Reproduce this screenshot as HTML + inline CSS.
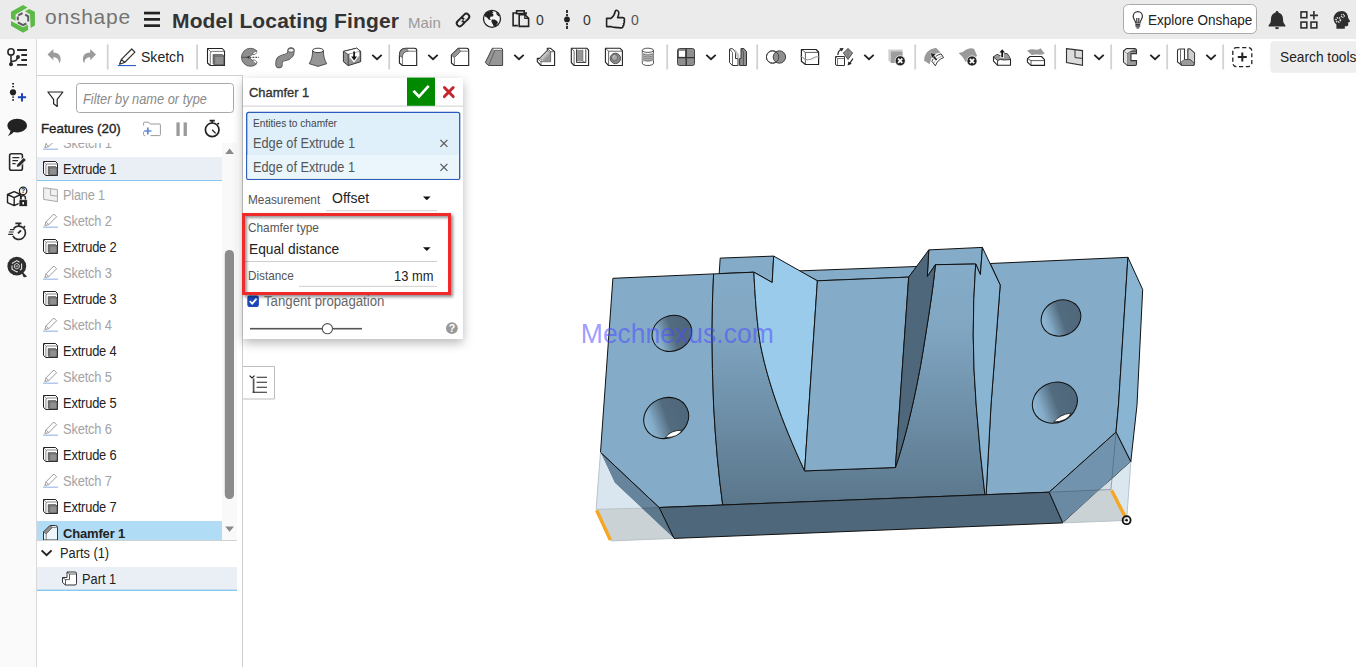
<!DOCTYPE html>
<html lang="en">
<head>
<meta charset="utf-8">
<title>Model Locating Finger</title>
<style>
*{box-sizing:border-box;margin:0;padding:0}
html,body{width:1356px;height:667px;overflow:hidden;background:#fff;font-family:"Liberation Sans",sans-serif;color:#222}
.abs{position:absolute}
#hdr{position:absolute;left:0;top:0;width:1356px;height:39px;background:#ebebeb}
#side{position:absolute;left:0;top:39px;width:37px;height:628px;background:#fafafa;border-right:1px solid #d9d9d9}
#tb{position:absolute;left:37px;top:39px;width:1319px;height:36px;background:#fff}
#fp{position:absolute;left:37px;top:75px;width:206px;height:592px;background:#fff;border-top:1px solid #cfcfcf;border-right:1px solid #cfcfcf}
.t{position:absolute;white-space:nowrap;line-height:1}
.sep{position:absolute;top:45px;width:2px;height:24px;background:#cfcfcf}
/* feature list */
.row{position:absolute;left:0;width:185px;height:26px}
.row .t{left:26px;top:6px;font-size:14px;color:#222;letter-spacing:-.2px}
.row.dim .t{color:#a3a3a3}
.row svg{position:absolute;left:5px;top:4px}
/* dialog */
#dlg{position:absolute;left:243px;top:77.6px;width:220px;height:261px;background:#fff;box-shadow:0 4px 10px rgba(0,0,0,.28)}
</style>
</head>
<body>
<div id="hdr"></div>
<div id="side"></div>
<div id="tb"></div>
<div id="fp"></div>
<!--MODEL-START-->
<svg class="abs" style="left:0;top:0" width="1356" height="667" viewBox="0 0 1356 667">
<defs>
<linearGradient id="gRib" x1="0" y1="270" x2="0" y2="505" gradientUnits="userSpaceOnUse">
<stop offset="0" stop-color="#84abc7"/><stop offset=".25" stop-color="#80a6c2"/><stop offset="1" stop-color="#5a768b"/>
</linearGradient>
<linearGradient id="gHole" x1="0" y1=".46" x2="1" y2=".54">
<stop offset="0" stop-color="#8fb9d6"/><stop offset=".18" stop-color="#84abc7"/><stop offset=".52" stop-color="#526b7e"/><stop offset="1" stop-color="#4f677a"/>
</linearGradient>
</defs>
<g stroke="#111" stroke-width="1" stroke-linejoin="round">
<!-- back blocks -->
<polygon points="720.2,258.1 773.7,256.1 772.2,282.5 753.9,272.2 719.2,273.6" fill="#84abc7"/>
<polygon points="928.8,249.9 982.4,247.4 980.4,274.6 975.7,264 935.4,264.7 927.3,276.6" fill="#84abc7"/>
<!-- top face -->
<polygon points="798.9,270.9 916.9,266.5 908.7,277.1 817.4,280.8" fill="#84abc7"/>
<!-- left plate -->
<path d="M612.9,278.3 L713.6,273.9 Q710.5,330 713.6,405 Q716.5,460 722.7,505 L659.1,507.5 L600.5,452.4 Z" fill="#84abc7"/>
<!-- right plate -->
<polygon points="990.3,263.5 1127.9,257.3 1118.5,405 1116,432.1 1049.2,492.2 986.1,494.7 991,405 1000.2,285" fill="#84abc7"/>
<!-- right side face -->
<polygon points="1127.9,257.3 1142.7,289.5 1137,405 1130.8,461.8 1116,432.1 1118.5,405" fill="#89b4d2"/>
<!-- U-shaped rib front face -->
<path d="M713.6,273.9 L753.9,272.2 C755,300 758,335 761.8,351.3 C768,380 780,418 804.6,470.9 L895.4,467.5 C910,425 920,370 923,351.3 C928,320 933,290 935.4,264.7 L975.7,264 Q970.5,335 976.2,405 Q979.5,450 984.9,494.7 L722.7,505 Q716.5,460 713.6,405 Q710.5,330 713.6,273.9 Z" fill="url(#gRib)"/>
<!-- light face left of U -->
<path d="M773.7,256.1 L817.4,280.8 L804.6,470.9 C780,418 768,380 761.8,351.3 C758,335 755,300 753.9,272.2 L772.2,282.5 Z" fill="#9acbea"/>
<!-- central block -->
<polygon points="817.4,280.8 908.7,277.1 895.4,467.5 804.6,470.9" fill="#84abc7"/>
<!-- dark face right of U -->
<path d="M908.7,277.1 L928.8,249.9 L927.3,276.6 L935.4,264.7 C933,290 928,320 923,351.3 C920,370 910,425 895.4,467.5 Z" fill="#4f677a"/>
<!-- right lighter sliver -->
<path d="M982.4,247.4 L1000.2,285 L991,405 L986.1,494.7 L984.9,494.7 Q979.5,450 976.2,405 Q970.5,335 975.7,264 L980.4,274.6 Z" fill="#89b4d2"/>
<!-- bottom face -->
<polygon points="659.1,507.5 1049.2,492.2 1062.8,522.9 674,538.4" fill="#4f677a"/>
<!-- chamfer faces -->
<polygon points="600.5,452.4 659.1,507.5 674,538.4 614.6,482.8" fill="#66859d" stroke="none"/>
<polygon points="641.8,508.2 659.1,507.5 674,538.4" fill="#5c788d" stroke="none"/>
<path d="M600.5,452.4 L659.1,507.5 L674,538.4" fill="none"/>
<polygon points="1049.2,492.2 1116,432.1 1130.8,461.8 1062.8,522.9" fill="#7293ad" stroke="none"/>
<polygon points="1049.2,492.2 1099,490 1062.8,522.9" fill="#6a8aa3" stroke="none"/>
<path d="M1062.8,522.9 L1049.2,492.2 L1116,432.1 L1130.8,461.8 L1062.8,522.9" fill="none"/>
<!-- holes -->
<ellipse cx="671.9" cy="333.3" rx="20.3" ry="17.6" transform="rotate(-25 671.9 333.3)" fill="url(#gHole)"/>
<ellipse cx="666.2" cy="418" rx="23" ry="20" transform="rotate(-25 666.2 418)" fill="url(#gHole)"/>
<ellipse cx="1061" cy="318" rx="20.3" ry="17.6" transform="rotate(-25 1061 318)" fill="url(#gHole)"/>
<ellipse cx="1054.9" cy="402.6" rx="23" ry="20" transform="rotate(-25 1054.9 402.6)" fill="url(#gHole)"/>
</g>
<!-- hole white slivers -->
<path d="M665.2,437.6 Q670.4,430.2 682,430.2 Q678.2,437.6 665.2,437.6 Z" fill="#fff" stroke="#111" stroke-width=".8" stroke-linejoin="round"/>
<path d="M1053.7,422.1 Q1059.4,414.4 1071.2,413.1 Q1067.6,421.4 1053.7,422.1 Z" fill="#fff" stroke="#111" stroke-width=".8" stroke-linejoin="round"/>
<!-- ghost regions -->
<polygon points="600.5,452.4 596.1,509.3 641.8,508.2 614.6,482.8" fill="#d9e6ef"/>
<polygon points="596.1,509.3 610.9,540.9 674,538.4 641.8,508.2" fill="#cad2d6"/>
<polygon points="1130.8,461.8 1126.6,520.4 1111,489.5 1112,478.7" fill="#dbe7ef"/>
<polygon points="1062.8,522.9 1126.6,520.4 1111,489.5 1099,490" fill="#cad2d6"/>
<polygon points="1099,490 1111,489.5 1112,478.7" fill="#d2dde4"/>
<g stroke="#b9c3c9" stroke-width="1" fill="none">
<path d="M600.5,452.4 L596.1,509.3 M596.1,509.3 L641.8,508.2 M610.9,540.9 L674,538.4"/>
<path d="M1130.8,461.8 L1126.6,520.4 M1062.8,522.9 L1126.6,520.4"/>
</g>
<g stroke="rgba(60,80,95,.45)" stroke-width="1" fill="none">
<path d="M641.8,508.2 L659.1,507.5 M1116,432.1 L1111,489.5 M1049.2,492.2 L1111,489.5"/>
</g>
<!-- orange edges -->
<path d="M596.6,510.3 L610.4,540" stroke="#f5a623" stroke-width="3.4" stroke-linecap="butt"/>
<path d="M1111.6,490.3 L1125.6,517.6" stroke="#f5a623" stroke-width="3.4" stroke-linecap="butt"/>
<circle cx="1126.6" cy="520.2" r="4" fill="none" stroke="#111" stroke-width="1.8"/>
<circle cx="1126.6" cy="520.2" r="1.3" fill="#111"/>
<text x="580.8" y="342.8" font-family="Liberation Sans, sans-serif" font-size="27" fill="#4a4aff" fill-opacity=".55" textLength="193" lengthAdjust="spacingAndGlyphs">Mechnexus.com</text>
</svg>
<!--MODEL-END-->
<!--HEADER-START-->
<svg class="abs" style="left:0;top:0" width="1356" height="39" viewBox="0 0 1356 39">
<!-- onshape logo -->
<g fill="#5dba47">
<polygon points="11,11.7 23,5.1 27.6,7.6 15.6,14.4 15.6,20.8 11,18.5"/>
<polygon points="29,8.9 34.9,11.7 34.9,25.6 30.6,27.9 30,14.4 25,11.3"/>
<polygon points="11,21 23,27.3 28.1,24.8 28.1,30 23,32.7 11,25.8"/>
</g>
<path d="M18.2,15.3 L22.6,13.1 M25.2,14.6 L28.2,16.3 L28.2,21.6 M26.4,23.5 L23,25.2 L17.8,22.4 M17.8,20.2 L17.8,16.6" fill="none" stroke="#5b5b5b" stroke-width="2"/>
<!-- hamburger -->
<g fill="#222"><rect x="144" y="11.7" width="16" height="2.7"/><rect x="144" y="18" width="16" height="2.7"/><rect x="144" y="24.3" width="16" height="2.7"/></g>
<!-- link icon -->
<g fill="none" stroke="#222" stroke-width="1.9" transform="rotate(-45 463 20)">
<rect x="455.4" y="17.1" width="8.8" height="5.8" rx="2.9"/>
<rect x="461.8" y="17.1" width="8.8" height="5.8" rx="2.9"/>
</g>
<g transform="rotate(-45 463 20)"><rect x="461.2" y="18" width="1.7" height="1.8" fill="#ebebeb"/><rect x="463.2" y="20.3" width="1.7" height="1.8" fill="#ebebeb"/></g>
<!-- globe -->
<circle cx="492" cy="18.8" r="8.5" fill="#f4f4f4" stroke="#222" stroke-width="1.3"/>
<path d="M486.2,12.8 Q488.6,10.9 491.6,10.7 L493.4,12.2 L492.2,13.4 L493.8,14.8 L492.4,16.8 L490.6,16.6 L489.8,18.4 L491.2,19.8 L488.8,19.8 L487,17.6 L485.2,16.8 L484.8,14.8 Z" fill="#222"/>
<path d="M491.8,19.6 L494.6,19.4 L497.4,21.2 L497.8,23 L495.8,26 L494,26.6 L492.6,24 L491.4,21.4 Z" fill="#222"/>
<path d="M496.2,12 Q498.8,13.6 499.8,16.6 L498,16 L496.4,14 Z" fill="#222"/>
<!-- copy/paste icon -->
<g fill="none" stroke="#222" stroke-width="1.6">
<path d="M517,13 h-3.9 v12.6 h4.8"/>
<path d="M524.4,13 h1.8 v1.4"/>
<rect x="516.6" y="10.8" width="7.6" height="2.8" fill="#ebebeb"/>
<path d="M519.2,14.6 h5.6 l3.8,3.8 v8 h-9.4 z" fill="#ebebeb"/>
<path d="M524.8,14.6 v3.8 h3.8" stroke-width="1.2"/>
</g>
<!-- branch dots -->
<g fill="#222"><circle cx="567" cy="19.4" r="2.9"/><rect x="566.1" y="10" width="1.8" height="3"/><rect x="566.1" y="14" width="1.8" height="2.2"/><rect x="566.1" y="23" width="1.8" height="2.2"/><rect x="566.1" y="26" width="1.8" height="3"/></g>
<!-- thumbs up -->
<path d="M606.600,18.400 H611 C613.400,16.600 614.800,14 615.200,11.400 C615.600,9.600 618.800,10 618.800,13 C618.800,14.800 618.200,16.400 617.600,17.600 H622.600 C624.800,17.600 625,20 623.900,20.700 C624.900,21.500 624.600,23 623.500,23.500 C624.200,24.400 623.900,25.700 622.800,26.100 C623.200,27.200 622.400,28 621,27.900 L614.600,27.400 C613,27.300 612.200,26.800 611,26.600 H606.600 Z" fill="none" stroke="#222" stroke-width="1.600" stroke-linejoin="round"/>
<!-- explore button -->
<rect x="1123.5" y="4.5" width="133" height="29" rx="5" fill="#fff" stroke="#aaa"/>
<g fill="none" stroke="#333" stroke-width="1.2">
<path d="M1135.6,23 c0,-2.6 -2.4,-3.6 -2.4,-6.8 a4.6,4.6 0 0 1 9.2,0 c0,3.2 -2.4,4.2 -2.4,6.8 z"/>
<path d="M1135.4,24.6 h4.8 M1135.4,26.2 h4.8 M1136.4,27.8 h2.8 M1136.8,23 v-5 M1138.8,23 v-5"/>
</g>
<!-- bell -->
<path d="M1277,11 c0.9,0 1.4,0.6 1.4,1.4 c3,0.8 4.6,3.2 4.6,6.4 c0,3.6 0.8,5 2.4,6.4 v1.2 h-16.8 v-1.2 c1.6,-1.4 2.4,-2.8 2.4,-6.4 c0,-3.2 1.6,-5.6 4.6,-6.4 c0,-0.8 0.5,-1.4 1.4,-1.4 z M1275,27.2 h4 a2,2 0 0 1 -4,0z" fill="#2e2e2e"/>
<!-- apps -->
<g fill="none" stroke="#2e2e2e" stroke-width="1.6"><rect x="1301" y="11.9" width="5.8" height="5.8"/><rect x="1301" y="22.1" width="5.8" height="5.8"/><rect x="1311" y="22.1" width="5.8" height="5.8"/><path d="M1313.9,11.1 v8.4 M1310,15.4 h8"/></g>
<!-- head with gears -->
<g transform="translate(2683,0) scale(-1,1)">
<path d="M1341,11 c5,0 8.4,3.6 8.4,7.6 c0,3 -1.4,4.8 -2.8,6 v4.2 h-8.4 v-2.6 h-2 c-1,0 -1.4,-0.6 -1.4,-1.4 v-2.4 l-1.6,-0.6 c-0.4,-0.2 -0.4,-0.6 -0.2,-0.9 l1.8,-2.9 c0.2,-4 2.6,-7 6.200,-7 z" fill="#2e2e2e"/>
</g>
<circle cx="1338.2" cy="19.9" r="2.2" fill="none" stroke="#ebebeb" stroke-width="1.6" stroke-dasharray="1.15 0.85"/>
<circle cx="1342.8" cy="15.8" r="1.5" fill="none" stroke="#ebebeb" stroke-width="1.3" stroke-dasharray="0.9 0.7"/>
</svg>
<div class="t" style="left:45px;top:6.1px;font-size:21px;color:#747474;letter-spacing:.77px">onshape</div>
<div class="t" style="left:172px;top:10.3px;font-size:21px;font-weight:700;color:#333;letter-spacing:.15px">Model Locating Finger</div>
<div class="t" style="left:408px;top:15.4px;font-size:15px;color:#999;letter-spacing:.1px">Main</div>
<div class="t" style="left:536px;top:12.4px;font-size:15px;color:#333;transform:scaleX(0.933);transform-origin:0 0">0</div>
<div class="t" style="left:583px;top:12.4px;font-size:15px;color:#333;transform:scaleX(0.933);transform-origin:0 0">0</div>
<div class="t" style="left:631px;top:12.4px;font-size:15px;color:#555;transform:scaleX(0.933);transform-origin:0 0">0</div>
<div class="t" style="left:1148.2px;top:11.7px;font-size:15px;color:#222;transform:scaleX(0.900);transform-origin:0 0">Explore Onshape</div>
<!--HEADER-END-->
<!--TOOLBAR-START-->
<svg class="abs" style="left:0;top:39px" width="1356" height="37" viewBox="0 39 1356 37">
<!-- bottom border of toolbar -->
<!-- separators -->
<g fill="#d2d2d2">
<rect x="106.8" y="44.5" width="1.8" height="25"/><rect x="196.2" y="44.5" width="1.8" height="25"/><rect x="388.3" y="44.5" width="1.8" height="25"/><rect x="666.3" y="44.5" width="1.8" height="25"/><rect x="756.3" y="44.5" width="1.8" height="25"/><rect x="914.3" y="44.5" width="1.8" height="25"/><rect x="1054.3" y="44.5" width="1.8" height="25"/><rect x="1110.3" y="44.5" width="1.8" height="25"/><rect x="1166.3" y="44.5" width="1.8" height="25"/><rect x="1222.3" y="44.5" width="1.8" height="25"/>
</g>
<!-- chevrons -->
<g transform="translate(377,57)"><path d="M-4.7,-2.2 L0,2.2 L4.7,-2.2" fill="none" stroke="#222" stroke-width="1.8"/></g><g transform="translate(433,57)"><path d="M-4.7,-2.2 L0,2.2 L4.7,-2.2" fill="none" stroke="#222" stroke-width="1.8"/></g><g transform="translate(519,57)"><path d="M-4.7,-2.2 L0,2.2 L4.7,-2.2" fill="none" stroke="#222" stroke-width="1.8"/></g><g transform="translate(711,57)"><path d="M-4.7,-2.2 L0,2.2 L4.7,-2.2" fill="none" stroke="#222" stroke-width="1.8"/></g><g transform="translate(869,57)"><path d="M-4.7,-2.2 L0,2.2 L4.7,-2.2" fill="none" stroke="#222" stroke-width="1.8"/></g><g transform="translate(1099,57)"><path d="M-4.7,-2.2 L0,2.2 L4.7,-2.2" fill="none" stroke="#222" stroke-width="1.8"/></g><g transform="translate(1155,57)"><path d="M-4.7,-2.2 L0,2.2 L4.7,-2.2" fill="none" stroke="#222" stroke-width="1.8"/></g><g transform="translate(1211,57)"><path d="M-4.7,-2.2 L0,2.2 L4.7,-2.2" fill="none" stroke="#222" stroke-width="1.8"/></g>
<!-- undo / redo -->
<path d="M47.5,54.5 L53.3,49 V52.6 C58,52.6 60.6,55.4 60.6,59 C60.6,61 60,62.4 59,63.4 C59.3,59.8 57.4,57.2 53.3,57.2 V60.3 Z" fill="#9b9b9b"/>
<path d="M96,54.5 L90.2,49 V52.6 C85.5,52.6 82.9,55.4 82.9,59 C82.9,61 83.5,62.4 84.5,63.4 C84.2,59.8 86.1,57.2 90.2,57.2 V60.3 Z" fill="#9b9b9b"/>
<!-- sketch pencil -->
<g fill="none" stroke="#333" stroke-width="1.2" stroke-linejoin="round">
<path d="M119.6,64.2 L121.4,59.3 L131.7,49 L134.9,52.2 L124.6,62.5 Z M121.4,59.3 L124.6,62.5"/>
</g>
<rect x="117.8" y="65" width="18.2" height="1.1" fill="#2a5fc4"/>
<!-- 1 extrude -->
<path d="M207.5,48.5 H222.2 L224.5,51 V65.5 H210.3 L207.5,63 Z" fill="#fff" stroke="#222" stroke-width="1.1" stroke-linejoin="round"/>
<path d="M210.3,65.5 V53.6 Q210.3,51.4 212.5,51.4 H224.5 M207.7,48.7 L210.9,52" fill="none" stroke="#555" stroke-width=".8"/>
<path d="M213.2,54.7 H222.4 L224,56.2 V65 H214.7 L213.2,63.9 Z" fill="#8f8f8f" stroke="#444" stroke-width=".9" stroke-linejoin="round"/>
<path d="M213.2,54.7 L214.7,56.2 H224 M214.7,56.2 V65" fill="none" stroke="#555" stroke-width=".7"/>
<!-- 2 revolve -->
<path d="M256.9,51 A9,9 0 1 0 256.9,63.6 L248.6,57.3 Z" fill="#8f8f8f" stroke="#555" stroke-width=".9"/>
<ellipse cx="254.9" cy="53" rx="2.4" ry="1.2" transform="rotate(-38 254.9 53)" fill="#fff" stroke="#555" stroke-width=".7"/>
<ellipse cx="254.9" cy="61.6" rx="2.4" ry="1.2" transform="rotate(38 254.9 61.6)" fill="#fff" stroke="#555" stroke-width=".7"/>
<path d="M241.6,57.3 H248.4" stroke="#444" stroke-width=".8"/>
<path d="M246.6,57.3 L249.2,55.8 V58.8 Z" fill="#333"/>
<path d="M249.6,57.3 H259" stroke="#222" stroke-width="1" stroke-dasharray="1.8 1.1"/>
<!-- 3 sweep -->
<path d="M279,64.5 C278,54 291,61 291,51" fill="none" stroke="#555" stroke-width="7.4" stroke-linecap="round"/>
<path d="M279,64.5 C278,54 291,61 291,51" fill="none" stroke="#8f8f8f" stroke-width="5.6" stroke-linecap="round"/>
<ellipse cx="291" cy="50.3" rx="3" ry="2" fill="#eee" stroke="#555" stroke-width=".9"/>
<!-- 4 loft -->
<path d="M312.6,50.4 C312.6,56 311.6,60 309.2,63.7 L318,66.4 L326.7,63.7 C324.4,60 323.4,56 323.4,50.4 Z" fill="#969696" stroke="#444" stroke-width=".9" stroke-linejoin="round"/>
<ellipse cx="318" cy="50.4" rx="5.4" ry="2.2" fill="#fff" stroke="#333" stroke-width=".9"/>
<!-- 5 extrude down -->
<path d="M343.4,51.4 L356.7,48.2 L360.7,51.4 V61.7 L348.2,65.6 L343.4,61.7 Z" fill="#969696" stroke="#333" stroke-width="1" stroke-linejoin="round"/>
<path d="M343.4,51.4 L356.7,48.2 L360.7,51.4 L348.2,54.4 Z" fill="#fff" stroke="#333" stroke-width=".8" stroke-linejoin="round"/>
<path d="M348.2,54.4 V65.6" stroke="#333" stroke-width=".8"/>
<path d="M349.6,54.1 L359.2,51.8 V55.5 L354.1,62.6 L349.6,57.4 Z" fill="#fff"/>
<path d="M354.1,51.6 V58.5" stroke="#111" stroke-width="1.7"/>
<path d="M351.2,56.6 L354.1,60.6 L357,56.6 Z" fill="#111"/>
<!-- 6 fillet -->
<path d="M399.4,63 L402.4,65.5 H416.7 V50.6 Q416.7,48.3 414.5,48.3 H406 Q399.4,48.3 399.4,55.5 Z" fill="#fff" stroke="#222" stroke-width="1.1" stroke-linejoin="round"/>
<path d="M399.4,55.5 Q399.4,48.3 406,48.3 L408.6,51.2 Q402.4,51.2 402.4,57.7 Z" fill="#969696" stroke="#444" stroke-width=".7"/>
<path d="M402.4,65.5 V57.7 M408.6,51.2 H416.7" fill="none" stroke="#555" stroke-width=".8"/>
<!-- 7 chamfer -->
<path d="M451.4,63 L454.4,65.5 H468.7 V50.6 Q468.7,48.3 466.5,48.3 H458.2 L451.4,55.1 Z" fill="#fff" stroke="#222" stroke-width="1.1" stroke-linejoin="round"/>
<path d="M451.4,55.1 L458.2,48.3 L460.8,51.2 L454.4,57.7 Z" fill="#969696" stroke="#444" stroke-width=".7"/>
<path d="M454.4,65.5 V57.7 M460.8,51.2 H468.7" fill="none" stroke="#555" stroke-width=".8"/>
<!-- 8 draft -->
<path d="M485.3,62.6 L492.3,48.3 H501 Q502.6,48.3 502.6,50 V65.5 H488.7 Z" fill="#969696" stroke="#444" stroke-width="1" stroke-linejoin="round"/>
<path d="M492.9,48.8 H501 Q502.1,48.8 502.1,50.3 H494.9 Z" fill="#fff"/>
<path d="M488.7,65.5 L494.9,50.3 H502.6" fill="none" stroke="#555" stroke-width=".8"/>
<!-- 9 rib -->
<path d="M537.3,58.4 H539.6 L547.3,50.7 V48.3 H550.6 L554.6,51.7 V65.5 H541 L537.3,61.7 Z" fill="#fff" stroke="#222" stroke-width="1.1" stroke-linejoin="round"/>
<path d="M539.6,58.4 L547.3,50.7 L550.3,52.4 L542.1,60.6 Z" fill="#c4c4c4" stroke="#444" stroke-width=".6"/>
<path d="M542.6,60.9 L550.2,53.2 V60.9 Z" fill="#969696"/>
<path d="M537.3,58.4 L541,61.7 H550.6 V51.7 H554.6 M541,61.7 V65.5 M547.3,48.3 L550.6,51.7" fill="none" stroke="#444" stroke-width=".8"/>
<!-- 10 shell -->
<path d="M571.3,48.3 H587 L588.6,50.2 V65.5 H574.1 L571.3,62.7 Z" fill="#fff" stroke="#222" stroke-width="1.1" stroke-linejoin="round"/>
<path d="M571.3,48.3 L574.1,51.1 V65.5" fill="none" stroke="#444" stroke-width=".8"/>
<rect x="576.5" y="49.8" width="6.4" height="11.5" fill="#969696"/>
<path d="M576.5,61.3 H582.9 L585.8,62.5 H576.5 Z" fill="#bdbdbd"/>
<path d="M582.9,49.8 V61.3 L585.8,62.5" fill="none" stroke="#555" stroke-width=".6"/>
<path d="M576.5,49.3 V62.5 H585.8 V49.3" fill="none" stroke="#333" stroke-width=".9"/>
<!-- 11 hole -->
<path d="M605.4,48.3 H620.1 L622.4,50.7 V65.5 H608.6 L605.4,62.2 Z" fill="#fff" stroke="#222" stroke-width="1.1" stroke-linejoin="round"/>
<path d="M605.4,48.3 L608.6,51.2 H622.4 M608.6,51.2 V65.5" fill="none" stroke="#444" stroke-width=".8"/>
<circle cx="615.4" cy="58.4" r="5.2" fill="#8a8a8a" stroke="#444" stroke-width=".9"/>
<circle cx="614.6" cy="57.6" r="3.1" fill="#a8a8a8" stroke="#555" stroke-width=".7"/>
<path d="M613,57.2 Q613.4,55.6 615,55.4" fill="none" stroke="#ddd" stroke-width=".8"/>
<!-- 12 thread -->
<path d="M642.3,50.3 V63.2 A5.6,2.3 0 0 0 653.5,63.2 V50.3" fill="#fff" stroke="#444" stroke-width=".9"/>
<path d="M642.3,52.6 Q647.9,55 653.5,52.6 V60.7 Q647.9,63.1 642.3,60.7 Z" fill="#c0c0c0"/>
<ellipse cx="647.9" cy="50.3" rx="5.6" ry="2.1" fill="#fff" stroke="#444" stroke-width=".9"/>
<path d="M642.5,54 Q647.9,56.4 653.3,54 M642.5,55.9 Q647.9,58.3 653.3,55.9 M642.5,57.8 Q647.9,60.2 653.3,57.8 M642.5,59.7 Q647.9,62.1 653.3,59.7" fill="none" stroke="#777" stroke-width=".9"/>
<!-- 13 pattern -->
<g stroke="#444" stroke-width="1">
<rect x="677.5" y="48.5" width="17" height="17" rx="2" fill="#8f8f8f"/>
<rect x="678.6" y="50.2" width="7" height="7" fill="#fff" stroke-width=".7"/>
<path d="M686.2,48.5 V65.5 M677.5,57.6 H694.5" fill="none" stroke-width="1.4" stroke="#333"/>
</g>
<!-- 14 mirror -->
<path d="M729.5,49 L732.5,48.6 L735.5,52 V58.6 H738 V65.5 H732.5 L729.5,62.6 Z" fill="#fff" stroke="#333" stroke-width="1"/>
<path d="M732.5,65.5 V52.6 L729.5,49" fill="none" stroke="#444" stroke-width=".8"/>
<path d="M735,48.8 L739.5,55 V60 L736,56 Z" fill="#c9c9c9"/>
<path d="M746.5,51.6 L744,48.6 H741 V58.6 H739.6 V65.5 H746.5 Z" fill="#8f8f8f" stroke="#333" stroke-width="1"/>
<path d="M741,48.6 L743.4,51.6 V65.5" fill="none" stroke="#444" stroke-width=".8"/>
<!-- 15 boolean -->
<circle cx="772.6" cy="57" r="6.2" fill="#fff" stroke="#444" stroke-width="1"/>
<circle cx="779.4" cy="57" r="6.2" fill="#8f8f8f" stroke="#444" stroke-width="1"/>
<circle cx="772.6" cy="57" r="6.2" fill="none" stroke="#444" stroke-width="1"/>
<!-- 16 split -->
<path d="M801.4,49.5 H816 L818.6,52 V64.5 H805.4 L801.4,61.3 Z" fill="#fff" stroke="#222" stroke-width="1.2" stroke-linejoin="round"/>
<path d="M801.5,49.5 L805.4,52.4 H818.5 M805.4,52.4 V64.5" fill="none" stroke="#333" stroke-width=".8"/>
<path d="M800,56 Q803,57 805,59.4 Q810,60.4 813.5,58 T820,57.6" fill="none" stroke="#9a9a9a" stroke-width="1.1"/>
<!-- 17 transform -->
<path d="M835.5,56.5 H844.5 V65.5 H837 Q835.5,65.5 835.5,64 Z" fill="#fff" stroke="#333" stroke-width="1"/>
<path d="M835.5,56.5 L837.5,58.5 H844.5 M837.5,58.5 V65.5" fill="none" stroke="#444" stroke-width=".7"/>
<path d="M848,48.4 L852.6,53 L848,59.4 L843.4,53 Z" fill="#8f8f8f" stroke="#444" stroke-width=".9"/>
<path d="M848,48.4 V59.4" stroke="#666" stroke-width=".6"/>
<path d="M837.8,55 Q838,51 841,49.6" fill="none" stroke="#222" stroke-width="1.1"/>
<path d="M839.4,48.2 L843.6,48 L841.8,51.6 Z" fill="#222"/>
<path d="M853,58.6 L849.6,63.4" fill="none" stroke="#222" stroke-width="1.1"/>
<path d="M847.6,65.6 L848.4,61.4 L851.8,63.8 Z" fill="#222"/>
<!-- 18 delete part -->
<path d="M888.4,49.5 H902.5 V63 H891 L888.4,60.5 Z" fill="#cdcdcd"/>
<rect x="891" y="51.6" width="11.5" height="11.4" fill="#9e9e9e"/>
<g transform="translate(900.2,60.8)"><circle r="5.1" fill="#222" stroke="#fff" stroke-width=".8"/><path d="M-2.1,-2.1 L2.1,2.1 M2.1,-2.1 L-2.1,2.1" stroke="#fff" stroke-width="1.8"/></g>
<!-- 19 modify fillet -->
<path d="M924,60.6 Q924.6,49.6 936,47.8 L940.6,52.6 Q931,53.6 929.6,64.2 Z" fill="#9a9a9a"/>
<path d="M931.8,61.2 Q934.2,56 941,53.8 L943.6,57.6 Q937.6,59.6 935.4,65.8 Z" fill="#fff" stroke="#222" stroke-width=".9" stroke-linejoin="round"/>
<path d="M933.6,63 Q936,58.2 942.2,55.8" fill="none" stroke="#555" stroke-width=".5"/>
<path d="M936.8,60.2 L933,55.8" stroke="#fff" stroke-width="3.2"/>
<path d="M936.6,60 L933,55.8" stroke="#222" stroke-width="1.9"/>
<path d="M930.4,52.8 L936,54 L932,58.2 Z" fill="#222" stroke="#fff" stroke-width=".4"/>
<!-- 20 delete face -->
<path d="M958.6,53 Q963,52.6 966,49.8 Q969.6,47.4 974,48.8 L977.2,56 L965.6,62 Q962.6,56 958.6,53 Z" fill="#9a9a9a"/>
<g transform="translate(972,61)"><circle r="5.1" fill="#222" stroke="#fff" stroke-width=".8"/><path d="M-2.1,-2.1 L2.1,2.1 M2.1,-2.1 L-2.1,2.1" stroke="#fff" stroke-width="1.8"/></g>
<!-- 21 move face -->
<path d="M993.5,57 L997,54.6 Q1001,56.8 1004,54 Q1007,52.6 1008.4,55.4 L1010.5,59.5 V65.3 H997.6 L993.5,61.2 Z" fill="#fff" stroke="#222" stroke-width="1.1" stroke-linejoin="round"/>
<path d="M993.8,57 L997,54.8 Q1001,56.8 1004,54.2 Q1007,52.8 1008.3,55.5 L1010.2,59.4 L1004,60 Q1000,58.6 997.6,60.5 Z" fill="#9a9a9a"/>
<path d="M993.5,57 L997.6,60.5 Q1000,58.6 1004,60 L1010.5,59.5 M997.6,60.5 V65.3" fill="none" stroke="#222" stroke-width=".9"/>
<path d="M1002.2,57.8 V51" stroke="#fff" stroke-width="3.6"/>
<path d="M998.6,53 L1002.2,48.4 L1005.8,53 Z" fill="#fff"/>
<path d="M1002.2,57.2 V51" stroke="#111" stroke-width="1.8"/>
<path d="M999.5,52.5 L1002.2,49.2 L1004.9,52.5 Z" fill="#111"/>
<!-- 22 offset surface -->
<path d="M1027,50.8 Q1031,48.8 1034.6,49.6 Q1038,50.2 1040.6,48.2 L1044.6,53.4 Q1041.6,55.2 1038,54.6 Q1034.6,54 1031.8,55 Z" fill="#9a9a9a"/>
<path d="M1027.4,58.6 L1030,56.5 H1041.5 L1044.5,59.6 V65.4 H1031 L1027.4,62.2 Z" fill="#fff" stroke="#222" stroke-width="1.1" stroke-linejoin="round"/>
<path d="M1027.4,58.6 L1031,60.6 H1044.5 M1031,60.6 V65.4" fill="none" stroke="#333" stroke-width=".8"/>
<!-- 23 plane -->
<path d="M1066.5,48.6 L1082.5,50.6 V65.4 L1066.5,62.6 Z" fill="#dcdcdc" stroke="#333" stroke-width="1.1"/>
<path d="M1075,49.8 V57.6 L1082.5,58.4" fill="none" stroke="#333" stroke-width="1"/>
<!-- 24 frame -->
<path d="M1123.5,51 L1126.5,48.6 H1134.5 Q1136.5,48.6 1136.5,50.6 V53.6 H1131 V60.6 H1136.5 V64 Q1136.5,65.5 1135,65.5 H1127.5 L1123.5,62 Z" fill="#9a9a9a" stroke="#333" stroke-width="1.1"/>
<path d="M1123.5,51 L1127.5,53.6 V65.5 M1127.5,53.6 L1130,51.2 H1136.5" fill="none" stroke="#333" stroke-width=".9"/>
<path d="M1124,51.5 L1127.5,54 V65 L1124,62 Z" fill="#dedede"/><path d="M1124.2,51.4 L1126.6,49.2 H1134 L1130,51.2 L1127.5,53.2 Z" fill="#e6e6e6"/>
<!-- 25 sheet metal -->
<path d="M1177.5,51 Q1177.5,49 1179.5,49 H1184.5 V59.5 H1188 V49 H1190 L1194.5,53 V63.5 Q1194.5,65.5 1192.5,65.5 H1182 L1177.5,62 Z" fill="#fff" stroke="#333" stroke-width="1.1"/>
<path d="M1188,49 H1190 L1194.5,53 V63.5 L1190,59.5 H1188 Z" fill="#cfcfcf" stroke="#333" stroke-width=".8"/>
<path d="M1184.5,59.5 H1190 L1194.5,63.5 Q1194.5,65.5 1192.5,65.5 H1182 L1180.5,62.6 Z" fill="#9a9a9a" stroke="#444" stroke-width=".7"/>
<path d="M1180.5,49.4 V62.6 L1182,65.5" fill="none" stroke="#444" stroke-width=".8"/>
<!-- 26 dashed plus -->
<rect x="1232.8" y="47.6" width="19" height="19" rx="3.5" fill="none" stroke="#222" stroke-width="1.3" stroke-dasharray="4.2 2.6" stroke-dashoffset="1"/>
<path d="M1242.3,52.6 V61.6 M1237.8,57.1 H1246.8" stroke="#222" stroke-width="2"/>
<!-- search tools -->
<path d="M1356,41.2 H1274 Q1270.3,41.2 1270.3,45 V69 Q1270.3,72.8 1274,72.8 H1356 Z" fill="#eeeeee"/>
</svg>
<div class="t" style="left:141px;top:49.2px;font-size:15px;color:#222;transform:scaleX(0.937);transform-origin:0 0">Sketch</div>
<div class="t" style="left:1279.800px;top:48.8px;font-size:15px;color:#222;transform:scaleX(0.916);transform-origin:0 0">Search tools</div>
<!--TOOLBAR-END-->
<!--SIDE-START-->
<svg class="abs" style="left:0;top:39px" width="37" height="260" viewBox="0 39 37 260">
<!-- tree -->
<g fill="none" stroke="#2a2a2a" stroke-width="1.6">
<circle cx="11" cy="51.9" r="3.1"/>
<path d="M11,55 V64 M11,61.5 Q15.2,61.3 16.4,60 L18,57"/>
<path d="M17.1,50 H27 M21.3,55 H27 M21.3,60 H27 M17.1,64.9 H27" stroke-width="1.9"/>
</g>
<circle cx="11" cy="64.2" r="2" fill="#2a2a2a"/><circle cx="18" cy="56.9" r="2" fill="#2a2a2a"/>
<!-- version dots + plus -->
<path d="M13.100,83.1 v1.4 M13.100,85.9 v1.4 M13.100,96.4 v1.4 M13.100,99.3 v1.5" stroke="#222" stroke-width="1.9" fill="none"/>
<circle cx="13" cy="92.3" r="3.1" fill="#222"/>
<path d="M22,93.2 V101.4 M17.9,97.3 H26.1" stroke="#1a44b8" stroke-width="2"/>
<!-- comment bubble -->
<path d="M17.2,118.8 c5.5,0 9.8,3 9.8,6.8 s-4.3,6.8 -9.8,6.8 c-1.2,0 -2.4,-0.150 -3.5,-0.4 c-1.4,1.7 -3.5,3.1 -5.9,3.9 c1.4,-1.5 2.4,-3.3 2.8,-5.100 c-2,-1.3 -3.2,-3.1 -3.2,-5.2 c0,-3.8 4.3,-6.8 9.8,-6.8 z" fill="#222"/>
<!-- note/pencil -->
<rect x="9.6" y="153.8" width="12.8" height="16.4" rx="1.8" fill="none" stroke="#2a2a2a" stroke-width="1.6"/>
<path d="M12.4,157.7 H19.4 M12.4,160.7 H18 M12.4,163.7 H15.6" stroke="#2a2a2a" stroke-width="1.3" fill="none"/>
<path d="M16,167.6 L17,164.2 L23.8,157.4 L26.4,160 L19.6,166.8 Z" fill="#2a2a2a" stroke="#fafafa" stroke-width="1"/>
<!-- cube + lock + ? -->
<g fill="none" stroke="#222" stroke-width="1.4" stroke-linejoin="round">
<path d="M7.5,194.5 L14.2,191.6 L20.6,194.5 V202.6 L14.2,205.6 L7.5,202.6 Z M7.5,194.5 L14.2,197.6 L20.6,194.5 M14.2,197.6 V205.6" fill="#fafafa"/>
</g>
<circle cx="23.1" cy="190.9" r="3.7" fill="#fafafa" stroke="#222" stroke-width="1.2"/>
<text x="23.1" y="193.3" font-size="6.8" font-weight="700" fill="#222" text-anchor="middle" font-family="Liberation Sans, sans-serif">?</text>
<rect x="19" y="199.6" width="8.4" height="7" rx="1" fill="#222" stroke="#fafafa" stroke-width=".8"/>
<path d="M21,199.6 V197.8 a2.2,2.2 0 0 1 4.4,0 V199.6" fill="none" stroke="#222" stroke-width="1.4"/>
<rect x="22.4" y="202" width="1.6" height="2.4" fill="#fafafa"/>
<!-- stopwatch with speed lines -->
<g fill="none" stroke="#2a2a2a" stroke-width="1.7">
<path d="M13.5,228.6 A6.7,6.7 0 1 1 12.9,236"/>
<path d="M18.9,226 V223.6 M15.4,223.3 H21.4 M23.8,227.4 L25,226.2"/>
<path d="M18,233.4 L21,230.3" stroke-width="1.9"/>
<path d="M10,229.7 H14.4 M8.8,232 H13.6 M8.2,234.4 H13.2" stroke-width="1.2"/>
</g>
<!-- onshape magnifier -->
<circle cx="16.8" cy="266.2" r="9.4" fill="#2e2e2e"/>
<path d="M22.6,273 L26,276.4 L24,276.6 Z" fill="#2e2e2e" stroke="#2e2e2e" stroke-width="1.4" stroke-linejoin="round"/>
<g fill="none" stroke="#e4e4e4" stroke-width="1.1">
<path d="M12,263.4 L16.8,260.6 L19.6,262.2 M21.6,263.4 V269 L19.8,270 M17.8,271.4 L16.8,271.9 L12,269.2 V265.4"/>
<path d="M14.4,264.8 L16.8,263.4 L19.2,264.8 V267.6 L16.8,269 L14.4,267.6 Z" stroke-width=".9"/>
</g>
<circle cx="16.8" cy="266.2" r="1.3" fill="#8a8a8a"/>
</svg>
<!--SIDE-END-->
<!--FEATURES-START-->
<svg class="abs" style="left:37px;top:76px" width="206" height="70" viewBox="37 76 206 70">
<path d="M47.9,92 H62.9 L57.2,99.4 V106.4 L53.6,103.8 V99.4 Z" fill="none" stroke="#222" stroke-width="1.2" stroke-linejoin="round"/>
<rect x="76.5" y="83.5" width="157" height="29" rx="3" fill="#fff" stroke="#a9a9a9"/>
<path d="M143.6,125.6 V123.2 Q143.6,122.2 144.6,122.2 H148.6 L150.2,124 H159.4 Q160.4,124 160.4,125 V134.6 Q160.4,135.6 159.4,135.6 H150.6" fill="none" stroke="#9a9a9a" stroke-width="1"/>
<path d="M143.6,131.6 V134.6 Q143.6,135.6 144.6,135.6 H145.4" fill="none" stroke="#9a9a9a" stroke-width="1"/>
<path d="M147.8,127.4 V134.6 M144.2,131 H151.4" stroke="#5f88d8" stroke-width="1.7"/>
<rect x="176.4" y="122.4" width="3.3" height="13.6" fill="#9a9a9a"/><rect x="183.6" y="122.4" width="3.3" height="13.6" fill="#9a9a9a"/>
<g fill="none" stroke="#222" stroke-width="1.7"><circle cx="212.2" cy="129.8" r="6.8"/><path d="M212.2,123 V120.8 M209.6,120.6 H214.8 M217.4,124.4 L218.8,123" /><path d="M212.2,129.8 L215.6,133.4" stroke-width="1.3"/></g>
</svg>
<div class="t" style="left:83px;top:90.8px;font-size:15px;font-style:italic;color:#8a8a8a;transform:scaleX(0.854);transform-origin:0 0">Filter by name or type</div>
<div class="t" style="left:41.2px;top:121.7px;font-size:13.5px;font-weight:400;color:#222;-webkit-text-stroke:.36px #222;transform:scaleX(0.984);transform-origin:0 0">Features (20)</div>
<div class="abs" style="left:37px;top:143px;width:205px;height:397px;overflow:hidden">
<div class="abs" style="left:185px;top:0;width:15px;height:397px;background:#f9f9f9"></div>
<div class="row dim" style="top:-13px"><svg width="16" height="16" style="left:6px;top:5.2px;overflow:visible"><path d="M1.8,12.6 L3,8.8 L10.8,1 L13.6,3.8 L5.8,11.6 Z M3,8.8 L5.8,11.6" fill="none" stroke="#9a9a9a" stroke-width="1" stroke-linejoin="round"/><rect x="0" y="13.6" width="15" height="1.2" fill="#9dbbe8"/></svg><div class="t" style="left:25.9px;top:5.8px;font-size:14px;transform:scaleX(0.92);transform-origin:0 0">Sketch 1</div></div>
<div class="row" style="top:13px"><div class="abs" style="left:0;top:1px;width:185px;height:24px;background:#eaeff5;border-bottom:1.5px solid #86c8f0"></div><svg width="16" height="16" style="left:6px;top:5.2px;overflow:visible"><path d="M.5,.5 H12.6 L14.5,2.7 V14.5 H2.9 L.5,12.4 Z" fill="#fff" stroke="#222" stroke-width="1" stroke-linejoin="round"/><path d="M2.9,14.5 V4.7 Q2.9,3 4.6,3 H14.5 M.7,.7 L3.4,3.5" fill="none" stroke="#555" stroke-width=".7"/><path d="M5.3,5.7 H12.8 L14.1,7 V14.1 H6.6 L5.3,13.1 Z" fill="#8f8f8f" stroke="#444" stroke-width=".8" stroke-linejoin="round"/><path d="M5.3,5.7 L6.6,7 H14.1 M6.6,7 V14.1" fill="none" stroke="#555" stroke-width=".6"/></svg><div class="t" style="left:25.9px;top:5.8px;font-size:14px;transform:scaleX(0.92);transform-origin:0 0">Extrude 1</div></div>
<div class="row dim" style="top:39px"><svg width="16" height="16" style="left:6px;top:5.2px;overflow:visible"><path d="M.6,.8 L14.4,2.6 V14.6 L.6,12.4 Z" fill="#f1f1f1" stroke="#a8a8a8" stroke-width="1"/><path d="M7.6,1.8 V8.4 L14.4,9.2" fill="none" stroke="#a8a8a8" stroke-width="1"/></svg><div class="t" style="left:25.9px;top:5.8px;font-size:14px;transform:scaleX(0.910);transform-origin:0 0">Plane 1</div></div>
<div class="row dim" style="top:65px"><svg width="16" height="16" style="left:6px;top:5.2px;overflow:visible"><path d="M1.8,12.6 L3,8.8 L10.8,1 L13.6,3.8 L5.8,11.6 Z M3,8.8 L5.8,11.6" fill="none" stroke="#9a9a9a" stroke-width="1" stroke-linejoin="round"/><rect x="0" y="13.6" width="15" height="1.2" fill="#9dbbe8"/></svg><div class="t" style="left:25.9px;top:5.8px;font-size:14px;transform:scaleX(0.92);transform-origin:0 0">Sketch 2</div></div>
<div class="row" style="top:91px"><svg width="16" height="16" style="left:6px;top:5.2px;overflow:visible"><path d="M.5,.5 H12.6 L14.5,2.7 V14.5 H2.9 L.5,12.4 Z" fill="#fff" stroke="#222" stroke-width="1" stroke-linejoin="round"/><path d="M2.9,14.5 V4.7 Q2.9,3 4.6,3 H14.5 M.7,.7 L3.4,3.5" fill="none" stroke="#555" stroke-width=".7"/><path d="M5.3,5.7 H12.8 L14.1,7 V14.1 H6.6 L5.3,13.1 Z" fill="#8f8f8f" stroke="#444" stroke-width=".8" stroke-linejoin="round"/><path d="M5.3,5.7 L6.6,7 H14.1 M6.6,7 V14.1" fill="none" stroke="#555" stroke-width=".6"/></svg><div class="t" style="left:25.9px;top:5.8px;font-size:14px;transform:scaleX(0.92);transform-origin:0 0">Extrude 2</div></div>
<div class="row dim" style="top:117px"><svg width="16" height="16" style="left:6px;top:5.2px;overflow:visible"><path d="M1.8,12.6 L3,8.8 L10.8,1 L13.6,3.8 L5.8,11.6 Z M3,8.8 L5.8,11.6" fill="none" stroke="#9a9a9a" stroke-width="1" stroke-linejoin="round"/><rect x="0" y="13.6" width="15" height="1.2" fill="#9dbbe8"/></svg><div class="t" style="left:25.9px;top:5.8px;font-size:14px;transform:scaleX(0.92);transform-origin:0 0">Sketch 3</div></div>
<div class="row" style="top:143px"><svg width="16" height="16" style="left:6px;top:5.2px;overflow:visible"><path d="M.5,.5 H12.6 L14.5,2.7 V14.5 H2.9 L.5,12.4 Z" fill="#fff" stroke="#222" stroke-width="1" stroke-linejoin="round"/><path d="M2.9,14.5 V4.7 Q2.9,3 4.6,3 H14.5 M.7,.7 L3.4,3.5" fill="none" stroke="#555" stroke-width=".7"/><path d="M5.3,5.7 H12.8 L14.1,7 V14.1 H6.6 L5.3,13.1 Z" fill="#8f8f8f" stroke="#444" stroke-width=".8" stroke-linejoin="round"/><path d="M5.3,5.7 L6.6,7 H14.1 M6.6,7 V14.1" fill="none" stroke="#555" stroke-width=".6"/></svg><div class="t" style="left:25.9px;top:5.8px;font-size:14px;transform:scaleX(0.92);transform-origin:0 0">Extrude 3</div></div>
<div class="row dim" style="top:169px"><svg width="16" height="16" style="left:6px;top:5.2px;overflow:visible"><path d="M1.8,12.6 L3,8.8 L10.8,1 L13.6,3.8 L5.8,11.6 Z M3,8.8 L5.8,11.6" fill="none" stroke="#9a9a9a" stroke-width="1" stroke-linejoin="round"/><rect x="0" y="13.6" width="15" height="1.2" fill="#9dbbe8"/></svg><div class="t" style="left:25.9px;top:5.8px;font-size:14px;transform:scaleX(0.92);transform-origin:0 0">Sketch 4</div></div>
<div class="row" style="top:195px"><svg width="16" height="16" style="left:6px;top:5.2px;overflow:visible"><path d="M.5,.5 H12.6 L14.5,2.7 V14.5 H2.9 L.5,12.4 Z" fill="#fff" stroke="#222" stroke-width="1" stroke-linejoin="round"/><path d="M2.9,14.5 V4.7 Q2.9,3 4.6,3 H14.5 M.7,.7 L3.4,3.5" fill="none" stroke="#555" stroke-width=".7"/><path d="M5.3,5.7 H12.8 L14.1,7 V14.1 H6.6 L5.3,13.1 Z" fill="#8f8f8f" stroke="#444" stroke-width=".8" stroke-linejoin="round"/><path d="M5.3,5.7 L6.6,7 H14.1 M6.6,7 V14.1" fill="none" stroke="#555" stroke-width=".6"/></svg><div class="t" style="left:25.9px;top:5.8px;font-size:14px;transform:scaleX(0.92);transform-origin:0 0">Extrude 4</div></div>
<div class="row dim" style="top:221px"><svg width="16" height="16" style="left:6px;top:5.2px;overflow:visible"><path d="M1.8,12.6 L3,8.8 L10.8,1 L13.6,3.8 L5.8,11.6 Z M3,8.8 L5.8,11.6" fill="none" stroke="#9a9a9a" stroke-width="1" stroke-linejoin="round"/><rect x="0" y="13.6" width="15" height="1.2" fill="#9dbbe8"/></svg><div class="t" style="left:25.9px;top:5.8px;font-size:14px;transform:scaleX(0.92);transform-origin:0 0">Sketch 5</div></div>
<div class="row" style="top:247px"><svg width="16" height="16" style="left:6px;top:5.2px;overflow:visible"><path d="M.5,.5 H12.6 L14.5,2.7 V14.5 H2.9 L.5,12.4 Z" fill="#fff" stroke="#222" stroke-width="1" stroke-linejoin="round"/><path d="M2.9,14.5 V4.7 Q2.9,3 4.6,3 H14.5 M.7,.7 L3.4,3.5" fill="none" stroke="#555" stroke-width=".7"/><path d="M5.3,5.7 H12.8 L14.1,7 V14.1 H6.6 L5.3,13.1 Z" fill="#8f8f8f" stroke="#444" stroke-width=".8" stroke-linejoin="round"/><path d="M5.3,5.7 L6.6,7 H14.1 M6.6,7 V14.1" fill="none" stroke="#555" stroke-width=".6"/></svg><div class="t" style="left:25.9px;top:5.8px;font-size:14px;transform:scaleX(0.92);transform-origin:0 0">Extrude 5</div></div>
<div class="row dim" style="top:273px"><svg width="16" height="16" style="left:6px;top:5.2px;overflow:visible"><path d="M1.8,12.6 L3,8.8 L10.8,1 L13.6,3.8 L5.8,11.6 Z M3,8.8 L5.8,11.6" fill="none" stroke="#9a9a9a" stroke-width="1" stroke-linejoin="round"/><rect x="0" y="13.6" width="15" height="1.2" fill="#9dbbe8"/></svg><div class="t" style="left:25.9px;top:5.8px;font-size:14px;transform:scaleX(0.92);transform-origin:0 0">Sketch 6</div></div>
<div class="row" style="top:299px"><svg width="16" height="16" style="left:6px;top:5.2px;overflow:visible"><path d="M.5,.5 H12.6 L14.5,2.7 V14.5 H2.9 L.5,12.4 Z" fill="#fff" stroke="#222" stroke-width="1" stroke-linejoin="round"/><path d="M2.9,14.5 V4.7 Q2.9,3 4.6,3 H14.5 M.7,.7 L3.4,3.5" fill="none" stroke="#555" stroke-width=".7"/><path d="M5.3,5.7 H12.8 L14.1,7 V14.1 H6.6 L5.3,13.1 Z" fill="#8f8f8f" stroke="#444" stroke-width=".8" stroke-linejoin="round"/><path d="M5.3,5.7 L6.6,7 H14.1 M6.6,7 V14.1" fill="none" stroke="#555" stroke-width=".6"/></svg><div class="t" style="left:25.9px;top:5.8px;font-size:14px;transform:scaleX(0.92);transform-origin:0 0">Extrude 6</div></div>
<div class="row dim" style="top:325px"><svg width="16" height="16" style="left:6px;top:5.2px;overflow:visible"><path d="M1.8,12.6 L3,8.8 L10.8,1 L13.6,3.8 L5.8,11.6 Z M3,8.8 L5.8,11.6" fill="none" stroke="#9a9a9a" stroke-width="1" stroke-linejoin="round"/><rect x="0" y="13.6" width="15" height="1.2" fill="#9dbbe8"/></svg><div class="t" style="left:25.9px;top:5.8px;font-size:14px;transform:scaleX(0.92);transform-origin:0 0">Sketch 7</div></div>
<div class="row" style="top:351px"><svg width="16" height="16" style="left:6px;top:5.2px;overflow:visible"><path d="M.5,.5 H12.6 L14.5,2.7 V14.5 H2.9 L.5,12.4 Z" fill="#fff" stroke="#222" stroke-width="1" stroke-linejoin="round"/><path d="M2.9,14.5 V4.7 Q2.9,3 4.6,3 H14.5 M.7,.7 L3.4,3.5" fill="none" stroke="#555" stroke-width=".7"/><path d="M5.3,5.7 H12.8 L14.1,7 V14.1 H6.6 L5.3,13.1 Z" fill="#8f8f8f" stroke="#444" stroke-width=".8" stroke-linejoin="round"/><path d="M5.3,5.7 L6.6,7 H14.1 M6.6,7 V14.1" fill="none" stroke="#555" stroke-width=".6"/></svg><div class="t" style="left:25.9px;top:5.8px;font-size:14px;transform:scaleX(0.92);transform-origin:0 0">Extrude 7</div></div>
<div class="row" style="top:377px"><div class="abs" style="left:0;top:1px;width:185px;height:26px;background:#b1dcf5"></div><svg width="16" height="16" style="left:6px;top:4.6px;overflow:visible"><path d="M.5,15 V7 L7,.5 H12.5 Q14.5,.5 14.5,2.5 V15 Z" fill="#eef6fc" stroke="#333" stroke-width="1"/><path d="M.5,7 L7,.5 L9.4,2.4 L3.2,8.8 Z" fill="#8f8f8f" stroke="#444" stroke-width=".7"/><path d="M3.2,8.8 V15 M9.4,2.4 H14.5" fill="none" stroke="#555" stroke-width=".7"/></svg><div class="t" style="left:25.9px;top:6.6px;font-size:13px;font-weight:700;letter-spacing:-.15px;color:#222">Chamfer 1</div></div>
<svg class="abs" style="left:185px;top:0" width="20" height="397" viewBox="222 143 20 397"><path d="M225.2,154 L229.6,148.6 L234,154 Z" fill="#8a8a8a"/><rect x="224.8" y="250" width="9.2" height="249" rx="4.4" fill="#8c8c8c"/><path d="M225.2,526.4 L229.6,531.8 L234,526.4 Z" fill="#8a8a8a"/></svg>
</div>
<div class="abs" style="left:37px;top:539.5px;width:200px;height:1px;background:#d0d0d0"></div>
<svg class="abs" style="left:37px;top:541px" width="206" height="52" viewBox="37 541 206 52"><path d="M41.6,550.4 L46.6,555.2 L51.6,550.4" fill="none" stroke="#222" stroke-width="2"/><rect x="37" y="567" width="200" height="23" fill="#eaeff5"/><rect x="37" y="589.6" width="200" height="1.4" fill="#86c8f0"/><path d="M62.5,577.5 H67 V572 H75 Q76.5,572 76.5,573.5 V583.5 Q76.5,585 75,585 H65.5 L62.5,582.5 Z" fill="#fff" stroke="#333" stroke-width="1"/><path d="M67,572 L69.5,574 H76.5 M69.5,574 V579.6 H65.5 L62.5,577.5 M65.5,579.6 V585" fill="none" stroke="#333" stroke-width=".8"/></svg>
<div class="t" style="left:60.2px;top:545.8px;font-size:14px;color:#222;transform:scaleX(0.914);transform-origin:0 0">Parts (1)</div>
<div class="t" style="left:82.2px;top:571.8px;font-size:14px;color:#222;transform:scaleX(0.915);transform-origin:0 0">Part 1</div>
<!--FEATURES-END-->
<!--DIALOG-START-->
<div id="dlg"></div>
<svg class="abs" style="left:243px;top:77px" width="222" height="330" viewBox="243 77 222 330">
<!-- title separator -->
<rect x="243" y="105.6" width="220" height="1" fill="#d0d0d0"/>
<!-- green check -->
<rect x="407" y="77.6" width="28" height="28.2" fill="#008a00"/>
<path d="M414.4,91.8 L419,96.6 L427.8,86.8" fill="none" stroke="#fff" stroke-width="2.7" stroke-linecap="square"/>
<!-- red x -->
<path d="M444.4,87.6 L453.2,96.6 M453.2,87.6 L444.4,96.6" stroke="#c4262e" stroke-width="2.9" stroke-linecap="round"/>
<!-- entities box -->
<rect x="246.7" y="112.4" width="213" height="67" rx="2" fill="#dff0fb" stroke="#2a5bbd" stroke-width="1.3"/>
<rect x="247.4" y="155" width="211.6" height="23.8" fill="#eaf5fc"/>
<path d="M440.4,139.8 L447.4,146.8 M447.4,139.8 L440.4,146.8 M440.4,163.8 L447.4,170.8 M447.4,163.8 L440.4,170.8" stroke="#555" stroke-width="1.2"/>
<!-- measurement select -->
<rect x="326" y="210.2" width="111" height="1" fill="#cfcfcf"/>
<path d="M423,196.4 H430.6 L426.8,200.2 Z" fill="#111"/>
<!-- highlighted box shadow + red border -->
<rect x="245" y="261" width="192" height="1" fill="#cfcfcf"/>
<path d="M423,247.2 H430.6 L426.8,251 Z" fill="#111"/>
<rect x="299" y="285.8" width="138" height="1" fill="#cfcfcf"/>
<!-- checkbox -->
<rect x="247.3" y="295.4" width="11.6" height="11.6" rx="2.2" fill="#1c46b9"/>
<path d="M249.8,301.2 L252.2,303.6 L256.6,298.6" fill="none" stroke="#fff" stroke-width="1.8"/>
<!-- slider -->
<rect x="250" y="327.9" width="112" height="1.6" fill="#555"/>
<circle cx="327.4" cy="328.7" r="5.1" fill="#fff" stroke="#555" stroke-width="1.1"/>
<!-- help -->
<circle cx="451.9" cy="328.2" r="5.9" fill="#999"/>
<text x="451.9" y="332.2" font-size="10.5" font-weight="700" fill="#fff" text-anchor="middle" font-family="Liberation Sans, sans-serif">?</text>
<!-- toggle button -->
<path d="M243,366.5 H274.5 V399 H243" fill="#fff" stroke="#bdbdbd" stroke-width="1"/>
<path d="M253.6,378.4 V392.6" stroke="#555" stroke-width="1.7"/>
<path d="M249.6,375.6 L252,378 L254.6,375.6" fill="none" stroke="#222" stroke-width="1.2"/>
<path d="M256.6,377.2 H267 M256.6,382.2 H267 M256.6,387.2 H267 M252.6,392.2 H267" stroke="#222" stroke-width="1.1"/>
</svg>
<div class="abs" style="left:242.4px;top:213.4px;width:208.6px;height:81.2px;border:3px solid #f02a2a;box-shadow:2px 2px 3px rgba(0,0,0,.45), inset 2px 2px 3px rgba(0,0,0,.4)"></div>
<div class="t" style="left:249.4px;top:85.5px;font-size:13.5px;font-weight:400;color:#333;-webkit-text-stroke:.36px #333;transform:scaleX(0.955);transform-origin:0 0">Chamfer 1</div>
<div class="t" style="left:252.6px;top:118.0px;font-size:11px;color:#444;transform:scaleX(0.921);transform-origin:0 0">Entities to chamfer</div>
<div class="t" style="left:253.4px;top:135.9px;font-size:14px;color:#555;transform:scaleX(0.910);transform-origin:0 0">Edge of Extrude 1</div>
<div class="t" style="left:253.4px;top:159.9px;font-size:14px;color:#555;transform:scaleX(0.910);transform-origin:0 0">Edge of Extrude 1</div>
<div class="t" style="left:248.2px;top:192.5px;font-size:13px;color:#555;transform:scaleX(0.908);transform-origin:0 0">Measurement</div>
<div class="t" style="left:332.3px;top:190.1px;font-size:15px;color:#222;transform:scaleX(0.933);transform-origin:0 0">Offset</div>
<div class="t" style="left:248.2px;top:220.7px;font-size:13px;color:#555;transform:scaleX(0.909);transform-origin:0 0">Chamfer type</div>
<div class="t" style="left:249.3px;top:240.7px;font-size:15px;color:#222;transform:scaleX(0.917);transform-origin:0 0">Equal distance</div>
<div class="t" style="left:248.2px;top:268.6px;font-size:13px;color:#555;transform:scaleX(0.904);transform-origin:0 0">Distance</div>
<div class="t" style="left:394px;top:268.6px;font-size:14px;color:#222;transform:scaleX(0.922);transform-origin:0 0">13 mm</div>
<div class="t" style="left:264.2px;top:294.2px;font-size:14px;color:#666;transform:scaleX(0.943);transform-origin:0 0">Tangent propagation</div>
<!--DIALOG-END-->
</body>
</html>
